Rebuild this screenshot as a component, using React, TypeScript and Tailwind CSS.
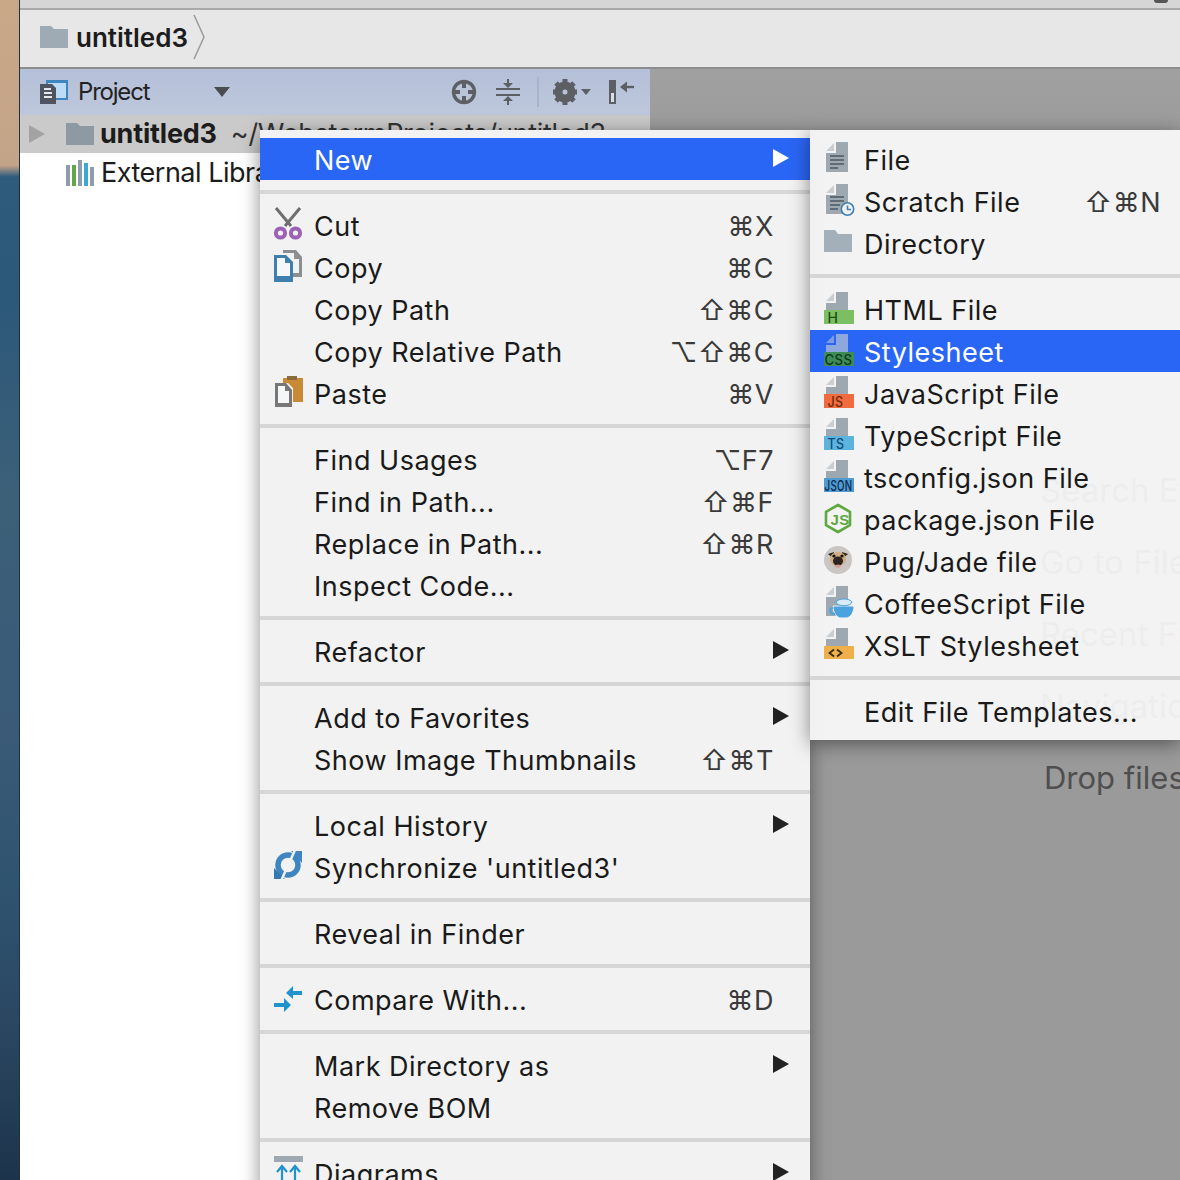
import React from "react";

const FONT = '"Inter", "DejaVu Sans", sans-serif';

function Page({ h = 29, fill = "#9da8b1", tri = "#c9ced3" }: { h?: number; fill?: string; tri?: string }) {
  return (
    <>
      <path d={`M13 -1H25V${h}H3V10H13Z`} fill={fill} />
      <path d="M11 0V8H3Z" fill={tri} />
    </>
  );
}

function Svg({ children }: { children: React.ReactNode }) {
  return (
    <svg width="32" height="32" viewBox="0 0 32 32" style={{ overflow: "visible" }} className="shrink-0">
      {children}
    </svg>
  );
}

function FileIco() {
  return (
    <Svg>
      <Page />
      <path d="M7 13H21M7 17H21M7 21H21M7 25H15" stroke="#5f6b75" strokeWidth="2" />
    </Svg>
  );
}
function ScratchIco() {
  return (
    <Svg>
      <Page />
      <path d="M7 12H21M7 16H21M7 20H17M7 24H15" stroke="#5f6b75" strokeWidth="2" />
      <circle cx="24.5" cy="24" r="6.2" fill="#f2f2f2" stroke="#3f7fb5" strokeWidth="1.6" />
      <path d="M24.5 20.5V24.5H28" fill="none" stroke="#3f7fb5" strokeWidth="1.6" />
    </Svg>
  );
}
function FolderIco() {
  return (
    <Svg>
      <path d="M1 3H12L15 7H29V25H1Z" fill="#a3afb9" />
    </Svg>
  );
}
function BarIco({ bar, color, label, size = 14, width, pageFill, tri }: { bar: string; color: string; label: string; size?: number; width?: number; pageFill?: string; tri?: string }) {
  return (
    <Svg>
      <Page h={17} fill={pageFill} tri={tri} />
      <rect x="1" y="17" width="30" height="14" fill={bar} />
      <text x={width && width > 20 ? 1.5 : 4.5} y="30" fontSize={size} fontWeight="500" fill={color} fontFamily='"Inter", sans-serif' {...(width ? { textLength: width, lengthAdjust: "spacingAndGlyphs" } : {})}>
        {label}
      </text>
    </Svg>
  );
}
function NodeIco() {
  return (
    <Svg>
      <path d="M15 2L27 8.8V22.2L15 29L3 22.2V8.8Z" fill="none" stroke="#5fa83f" strokeWidth="2.6" strokeLinejoin="round" />
      <text x="7.5" y="21.5" fontSize="15" fontWeight="700" fill="#5fa83f" fontFamily='"Liberation Sans", sans-serif'>
        JS
      </text>
    </Svg>
  );
}
function PugIco() {
  return (
    <Svg>
      <circle cx="15" cy="15" r="14" fill="#c9c6c3" />
      <path d="M5 9L11 7L10 13Z M25 9L19 7L20 13Z" fill="#2c2420" />
      <ellipse cx="15" cy="14" rx="8" ry="7" fill="#d2ab80" />
      <ellipse cx="15" cy="16" rx="5" ry="4.5" fill="#2c2420" />
      <circle cx="11" cy="11" r="1.6" fill="#111" />
      <circle cx="19" cy="11" r="1.6" fill="#111" />
      <ellipse cx="15" cy="21" rx="3" ry="1.5" fill="#d89a8f" />
    </Svg>
  );
}
function CoffeeIco() {
  return (
    <Svg>
      <Page />
      <path d="M10 19H31C31 26 27 31 23 31H18C14 31 10 26 10 19Z" fill="#4aa3df" stroke="#f2f2f2" strokeWidth="1" />
      <path d="M13 15C15 11 27 11 29 15C28 20 14 20 13 15Z" fill="#d8ecf8" stroke="#4aa3df" />
      <path d="M10 21C6 21 6 27 12 27" fill="none" stroke="#4aa3df" strokeWidth="2" />
    </Svg>
  );
}
function XsltIco() {
  return (
    <Svg>
      <Page h={17} />
      <rect x="1" y="17" width="30" height="13" fill="#eeb04b" />
      <path d="M11 20.5L6.5 24L11 27.5M14 20.5L18.5 24L14 27.5" fill="none" stroke="#3a2a10" strokeWidth="1.8" />
    </Svg>
  );
}
function CutIco() {
  return (
    <Svg>
      <path d="M3 -1L18 17M27 -1L12 17" stroke="#6e6e6e" strokeWidth="3" fill="none" />
      <circle cx="7.5" cy="24" r="4.6" fill="none" stroke="#9c62b5" strokeWidth="4" />
      <circle cx="22.5" cy="24" r="4.6" fill="none" stroke="#9c62b5" strokeWidth="4" />
    </Svg>
  );
}
function CopyIco() {
  return (
    <Svg>
      <path d="M10 -1H23L29 6V26H20V22H26V8H21V2H10Z" fill="#8b8f92" />
      <path d="M1 4H13L20 11V31H1Z" fill="#3f7fb0" />
      <path d="M4 7H12V12H17V25H4Z" fill="#f4f6f8" />
    </Svg>
  );
}
function PasteIco() {
  return (
    <Svg>
      <path d="M10 1H14V-1H24V1H30V25H20V11L15 6H10Z" fill="#c98a35" />
      <path d="M14 -1H24V3H14Z" fill="#8b6a3c" />
      <path d="M2 6H13L19 13V30H2Z" fill="#777" />
      <path d="M5 9H12V14H16V26H5Z" fill="#f4f6f8" />
    </Svg>
  );
}
function SyncIco() {
  return (
    <Svg>
      <circle cx="15" cy="14" r="10" fill="none" stroke="#3f86c0" strokeWidth="5.5" />
      <path d="M18 0H29V12Z" fill="#3f86c0" />
      <path d="M1 28V17L12 28Z" fill="#3079b2" />
      <path d="M22 -1L8 30" stroke="#f2f2f2" strokeWidth="2.5" />
    </Svg>
  );
}
function CompareIco() {
  return (
    <Svg>
      <path d="M1 20H11V15L18 22L11 29V24H1Z" fill="#1f93cc" />
      <path d="M29 8H20V3L13 10L20 16V12H29Z" fill="#1f93cc" />
    </Svg>
  );
}
function DiagramIco() {
  return (
    <Svg>
      <rect x="1" y="-1" width="29" height="6" fill="#9da8b1" />
      <path d="M9 26V10M4 15L9 9L14 15M22 26V10M17 15L22 9L27 15" stroke="#1f93cc" strokeWidth="2.2" fill="none" />
    </Svg>
  );
}

type Row = { label: string; icon?: React.ReactNode; sc?: string; arrow?: boolean; active?: boolean };

function MenuRow({ label, icon, sc, arrow, active, sub }: Row & { sub?: boolean }) {
  return (
    <div className={`flex h-[42px] items-center pl-[13px] ${active ? "bg-[#2a66f5] text-white" : "text-[#1a1a1a]"}`}>
      <div className="mr-[11px] flex h-[32px] w-[30px] shrink-0 items-start">{icon}</div>
      <span className="pt-[4px] whitespace-nowrap">{label}</span>
      <div className="flex-1" />
      {sc && <span className={`pt-[4px] whitespace-nowrap text-[#3a3a3a] ${sub ? "pr-[19px]" : "pr-[36px]"}`}>{sc}</span>}
      {arrow && (
        <svg width="18" height="20" viewBox="0 0 18 20" className="mr-[20px] mb-[2px]">
          <path d="M1 1L17 10L1 19Z" fill={active ? "#fff" : "#222"} />
        </svg>
      )}
    </div>
  );
}

function Sep() {
  return <div className="my-[10px] h-[4px] bg-[#d6d6d6]" />;
}

const main: Row[][] = [
  [{ label: "New", arrow: true, active: true }],
  [
    { label: "Cut", icon: <CutIco />, sc: "⌘X" },
    { label: "Copy", icon: <CopyIco />, sc: "⌘C" },
    { label: "Copy Path", sc: "⇧⌘C" },
    { label: "Copy Relative Path", sc: "⌥⇧⌘C" },
    { label: "Paste", icon: <PasteIco />, sc: "⌘V" },
  ],
  [
    { label: "Find Usages", sc: "⌥F7" },
    { label: "Find in Path...", sc: "⇧⌘F" },
    { label: "Replace in Path...", sc: "⇧⌘R" },
    { label: "Inspect Code..." },
  ],
  [{ label: "Refactor", arrow: true }],
  [
    { label: "Add to Favorites", arrow: true },
    { label: "Show Image Thumbnails", sc: "⇧⌘T" },
  ],
  [
    { label: "Local History", arrow: true },
    { label: "Synchronize 'untitled3'", icon: <SyncIco /> },
  ],
  [{ label: "Reveal in Finder" }],
  [{ label: "Compare With...", icon: <CompareIco />, sc: "⌘D" }],
  [
    { label: "Mark Directory as", arrow: true },
    { label: "Remove BOM" },
  ],
  [{ label: "Diagrams", icon: <DiagramIco />, arrow: true }],
];

const sub: Row[][] = [
  [
    { label: "File", icon: <FileIco /> },
    { label: "Scratch File", icon: <ScratchIco />, sc: "⇧⌘N" },
    { label: "Directory", icon: <FolderIco /> },
  ],
  [
    { label: "HTML File", icon: <BarIco bar="#7cbf62" color="#1d4d14" label="H" /> },
    { label: "Stylesheet", active: true, icon: <BarIco bar="#3e8c55" color="#0d3b22" label="CSS" width={28} pageFill="#8ea8de" tri="#7f9ce0" /> },
    { label: "JavaScript File", icon: <BarIco bar="#f26b3e" color="#6d2a10" label="JS" width={16} /> },
    { label: "TypeScript File", icon: <BarIco bar="#5cb3de" color="#0f4d78" label="TS" width={17} /> },
    { label: "tsconfig.json File", icon: <BarIco bar="#4f9bcf" color="#0a2a4f" label="JSON" width={28} /> },
    { label: "package.json File", icon: <NodeIco /> },
    { label: "Pug/Jade file", icon: <PugIco /> },
    { label: "CoffeeScript File", icon: <CoffeeIco /> },
    { label: "XSLT Stylesheet", icon: <XsltIco /> },
  ],
  [{ label: "Edit File Templates..." }],
];

function Menu({ groups, isSub, className }: { groups: Row[][]; isSub?: boolean; className: string }) {
  return (
    <div className={`absolute pt-[8px] text-[27px] leading-[42px] tracking-[0.5px] shadow-[0_4px_18px_rgba(0,0,0,0.45)] ${className}`}>
      {groups.map((g, i) => (
        <React.Fragment key={i}>
          {i > 0 && <Sep />}
          <div>
            {g.map((r) => (
              <MenuRow key={r.label} {...r} sub={isSub} />
            ))}
          </div>
        </React.Fragment>
      ))}
    </div>
  );
}

function ToolIcons() {
  return (
    <div className="flex items-center">
      <svg width="26" height="26" viewBox="0 0 26 26" className="mr-[18px]">
        <circle cx="13" cy="13" r="10.5" fill="none" stroke="#5c5f63" strokeWidth="3.4" />
        <path d="M13 2V9M13 17V24M2 13H9M17 13H24" stroke="#5c5f63" strokeWidth="4" />
      </svg>
      <svg width="26" height="28" viewBox="0 0 26 28" className="mr-[16px]">
        <path d="M1 11H25M1 17H25" stroke="#5c5f63" strokeWidth="2" />
        <path d="M13 1V6M13 27V22" stroke="#5c5f63" strokeWidth="2" />
        <path d="M8 5H18L13 10ZM8 23H18L13 18Z" fill="#5c5f63" />
      </svg>
      <div className="mr-[13px] h-[30px] w-[2px] bg-[#a8b2c8]" />
      <svg width="40" height="28" viewBox="0 0 40 28" className="mr-[16px]">
        <circle cx="13" cy="14" r="6.5" fill="none" stroke="#5c5f63" strokeWidth="8" />
        <path d="M13 1V6M13 22V27M1 14H5M21 14H25M4 5L8 9M22 5L18 9M4 23L8 19M22 23L18 19" stroke="#5c5f63" strokeWidth="5" />
        <path d="M29 11H39L34 17Z" fill="#5c5f63" />
      </svg>
      <svg width="28" height="28" viewBox="0 0 28 28">
        <rect x="1" y="2" width="7" height="24" fill="#5c5f63" />
        <rect x="3" y="15" width="3" height="9" fill="#d7dde9" />
        <path d="M26 9H14" stroke="#5c5f63" strokeWidth="2.4" />
        <path d="M19 3.5V14.5L12 9Z" fill="#5c5f63" />
      </svg>
    </div>
  );
}

export default function App() {
  return (
    <div className="relative flex h-[1180px] w-[1180px] overflow-hidden" style={{ fontFamily: FONT }}>
      <div className="h-full w-[20px] shrink-0 border-r-[1px] border-[#1d3143] bg-[linear-gradient(180deg,#c9a888_0%,#c4a488_14%,#2e5a7c_15%,#2c587a_25%,#3c6078_42%,#3a5a78_62%,#2f5470_75%,#2a4560_88%,#1c344b_100%)]" />
      <div className="flex min-w-0 flex-1 flex-col">
        <div className="h-[10px] shrink-0 border-b-2 border-[#a9a9a9] bg-[#d6d6d6]" />
        <div className="flex h-[59px] shrink-0 items-center border-b-2 border-[#8d8d8d] bg-[#e7e7e7] pb-[3px] pl-[20px]">
          <svg width="28" height="22" viewBox="0 0 28 22" className="mr-[8px]">
            <path d="M0 0H11L14 3H28V22H0Z" fill="#9eabb5" />
          </svg>
          <span className="text-[26px] font-semibold text-[#1c1c1c]">untitled3</span>
          <svg width="14" height="46" viewBox="0 0 14 46" className="ml-[4px]">
            <path d="M2 1L12 23L2 45" fill="none" stroke="#9a9a9a" strokeWidth="1.5" />
          </svg>
        </div>
        <div className="flex min-h-0 flex-1">
          <div className="flex w-[630px] shrink-0 flex-col bg-white">
            <div className="flex h-[46px] items-center bg-[linear-gradient(180deg,#b4c0d9,#bec7db)] pr-[14px] pl-[19px]">
              <svg width="30" height="26" viewBox="0 0 30 26" className="mr-[9px]">
                <rect x="7" y="1" width="22" height="20" fill="#3f86c0" />
                <rect x="9" y="4" width="18" height="15" fill="#bcdcf5" />
                <path d="M1 5H13L17 9V25H1Z" fill="#4e5560" />
                <path d="M5 10H12M5 14H13M5 18H13" stroke="#e8e8e8" strokeWidth="2" />
              </svg>
              <span className="text-[24px] tracking-[-1.2px] text-[#222]">Project</span>
              <svg width="16" height="10" viewBox="0 0 16 10" className="ml-[65px]">
                <path d="M0 0H16L8 10Z" fill="#4a4d50" />
              </svg>
              <div className="flex-1" />
              <ToolIcons />
            </div>
            <div className="flex h-[38px] items-center bg-[#cacaca] pl-[8px]">
              <svg width="18" height="20" viewBox="0 0 18 20" className="mr-[19px]">
                <path d="M1 1L17 10L1 19Z" fill="#a3a3a3" />
              </svg>
              <svg width="30" height="22" viewBox="0 0 30 22" className="mr-[5px]">
                <path d="M1 0H12L15 3H29V22H1Z" fill="#8d99a3" />
              </svg>
              <span className="text-[27px] font-bold tracking-[-0.2px] whitespace-nowrap text-[#1c1c1c]">untitled3</span>
              <span className="ml-[14px] text-[27px] tracking-[-0.3px] whitespace-nowrap text-[#333]">~/WebstormProjects/untitled3</span>
            </div>
            <div className="flex h-[40px] items-center pl-[46px]">
              <svg width="30" height="26" viewBox="0 0 30 26" className="mr-[5px]">
                <rect x="0" y="5" width="4" height="21" fill="#8f9cad" />
                <rect x="6" y="5" width="4" height="21" fill="#62a84a" />
                <rect x="12" y="0" width="4" height="26" fill="#8f9cad" />
                <rect x="18" y="3" width="4" height="23" fill="#3fa6d8" />
                <rect x="24" y="7" width="4" height="19" fill="#8f9cad" />
              </svg>
              <span className="text-[27px] tracking-[-0.5px] whitespace-nowrap text-[#1c1c1c]">External Libraries</span>
            </div>
          </div>
          <div className="relative flex-1 bg-[linear-gradient(180deg,#a0a0a0,#9a9a9a_8%)]">
            <span className="absolute top-[397px] left-[390px] text-[33px] whitespace-nowrap text-[#4a4a4a]">Search Everywhere</span>
            <span className="absolute top-[469px] left-[390px] text-[33px] whitespace-nowrap text-[#4a4a4a]">Go to File</span>
            <span className="absolute top-[541px] left-[390px] text-[33px] whitespace-nowrap text-[#4a4a4a]">Recent Files</span>
            <span className="absolute top-[613px] left-[390px] text-[33px] whitespace-nowrap text-[#4a4a4a]">Navigation Bar</span>
            <span className="absolute top-[686px] left-[394px] text-[31px] whitespace-nowrap text-[#4f4f4f]">Drop files here to open</span>
          </div>
        </div>
      </div>
      <div className="absolute top-0 right-[12px] h-[3px] w-[14px] rounded-b-full bg-[#555]" />
      <Menu groups={main} className="top-[130px] left-[260px] w-[550px] bg-[#f2f2f2]" />
      <Menu groups={sub} isSub className="top-[130px] left-[810px] h-[610px] w-[370px] bg-[rgba(250,250,250,0.93)]" />
    </div>
  );
}
